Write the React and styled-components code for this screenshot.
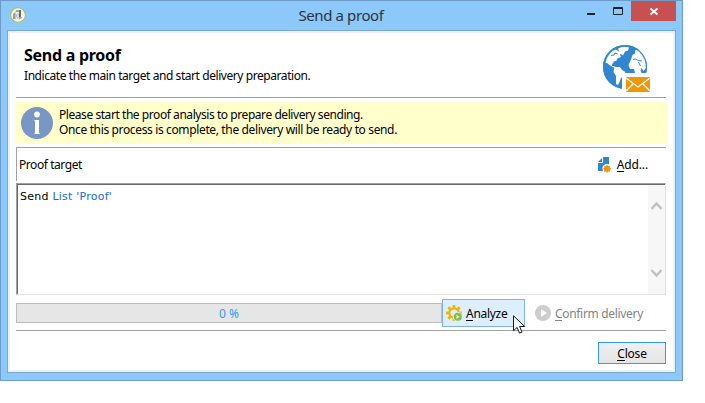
import React from "react";
import styled, { createGlobalStyle } from "styled-components";

const Global = createGlobalStyle`
  * { box-sizing: border-box; }
  body { margin: 0; background: #fff; color: #000; font: 12px/15px "Noto Sans", "Open Sans", sans-serif; overflow: hidden; }
  svg { display: block; flex: none; }
  button { font: inherit; color: inherit; margin: 0; padding: 0; border: 0; background: none; }
`;

const Window = styled.main`
  position: relative;
  width: 683px;
  height: 381px;
  padding: 0 7px 7px 6px;
  border: 1px solid #6c9bc8;
  background: #8dc8fa;
  display: flex;
  flex-direction: column;
`;

const TitleBar = styled.header`
  display: flex;
  height: 29px;
  flex: none;
  padding-left: 2px;
`;

const AppIcon = styled.div`
  width: 18px;
  padding-top: 5px;
`;

const Title = styled.div`
  flex: 1;
  padding-left: 72px;
  text-align: center;
  font-size: 15px;
  line-height: 28px;
  letter-spacing: ${(p) => p.$track}px;
  color: #2b3540;
`;

const Controls = styled.div`
  display: flex;
  margin-right: -1px;
`;

const Control = styled.button`
  width: ${(p) => p.$w}px;
  height: 20px;
  background: ${(p) => p.$bg || "transparent"};
`;

const Client = styled.div`
  width: 669px;
  height: 344px;
  border: 1px solid #78a8d8;
  outline: 2px solid #f0f0f0;
  outline-offset: -3px;
  background: #fff;
  padding: 2px 9px 2px 8px;
  display: flex;
  flex-direction: column;
`;

const Header = styled.section`
  display: flex;
  justify-content: space-between;
  height: 64px;
  flex: none;
  padding: 12px 14px 0 8px;
`;

const Heading = styled.h1`
  margin: 0;
  font-size: 16px;
  line-height: 20px;
  font-weight: 700;
  letter-spacing: ${(p) => p.$track}px;
`;

const Text = styled.div`
  white-space: nowrap;
  letter-spacing: ${(p) => p.$track || 0}px;
  u { text-decoration: none; box-shadow: 0 1px 0 currentColor; display: inline-block; height: 14px; line-height: 15px; }
`;

const Subtitle = styled(Text)`
  margin-top: 3px;
`;

const Rule = styled.div`
  height: 1px;
  flex: none;
  background: #a0a0a0;
`;

const Notice = styled.section`
  display: flex;
  align-items: flex-start;
  gap: 6px;
  height: 42px;
  flex: none;
  margin: 4px -1px 3px 0;
  padding: 5px 5px 0;
  background: #ffffcc;
`;

const TargetBar = styled.section`
  display: flex;
  align-items: center;
  justify-content: space-between;
  height: 34px;
  flex: none;
  padding: 0 18px 0 2px;
  border-top: 1px solid #a0a0a0;
  border-left: 1px solid #a0a0a0;
`;

const AddButton = styled.button`
  display: flex;
  align-items: center;
  gap: 6px;
`;

const TargetList = styled.section`
  display: flex;
  justify-content: space-between;
  height: 112px;
  flex: none;
  margin-top: 2px;
  border: 1px solid #e3e3e3;
  border-top-color: #a0a0a0;
  border-left-color: #a0a0a0;
`;

const ListContent = styled.div`
  flex: 1;
  padding: 4px 0 0 2px;
  border-top: 1px solid #696969;
  border-left: 1px solid #696969;
  font: 11px/15px "DejaVu Sans", sans-serif;
  white-space: nowrap;
  letter-spacing: ${(p) => p.$track}px;
  a { color: #1c68d8; }
`;

const ScrollBar = styled.div`
  width: 17px;
  border-top: 1px solid #696969;
  background: #f7f7f7;
  padding: 16px 0 16px 3px;
  display: flex;
  flex-direction: column;
  justify-content: space-between;
`;

const Actions = styled.section`
  display: flex;
  height: 28px;
  flex: none;
  margin: 4px 0 3px;
`;

const Progress = styled.div`
  width: 426px;
  height: 20px;
  margin-top: 4px;
  border: 1px solid #bcbcbc;
  background: #e6e6e6;
  color: #3399ff;
  text-align: center;
  line-height: 19px;
`;

const AnalyzeButton = styled.button`
  display: flex;
  align-items: center;
  gap: 4px;
  width: 83px;
  height: 28px;
  padding: 0 0 0 3px;
  border: 1px solid #7eb4ea;
  background: #ddeeff;
`;

const ConfirmButton = styled.button`
  display: flex;
  align-items: center;
  gap: 4px;
  margin-left: 10px;
  color: #838383;
`;

const Footer = styled.footer`
  display: flex;
  justify-content: flex-end;
  padding-top: 11px;
`;

const CloseButton = styled.button`
  width: 68px;
  height: 22px;
  border: 1px solid #3399ff;
  background: linear-gradient(#f0f0f0, #e5e5e5);
  display: flex;
  justify-content: center;
  align-items: center;
`;

const Pointer = styled.svg`
  position: absolute;
  left: 512px;
  top: 314px;
`;

const gearTeeth = [0, 45, 90, 135, 180, 225, 270, 315];

const LogoIcon = () => (
  <svg width="18" height="18" viewBox="0 0 18 18">
    <circle cx="9" cy="9" r="7.4" fill="#f3f3f3" stroke="#a3c653" strokeWidth="1.1" />
    <path d="M4 8l2.500-2v7H4z" fill="#9a9a9a" />
    <path d="M6.500 5.500C7 4 9 3.500 10 4.500v1.500H7z" fill="#9a9a9a" />
    <path d="M7.500 8.500c2-1.500 3.500 0 3 2s-3 2-3 0z" fill="#dedede" stroke="#999" strokeWidth=".6" />
    <path d="M11 4v7.500" stroke="#333" strokeWidth="1.400" />
    <path d="M10 13l3-1.500" stroke="#999" />
  </svg>
);

const GlobeIcon = () => (
  <svg width="50" height="49" viewBox="0 0 50 49">
    <circle cx="23" cy="22" r="22" fill="#3186d1" />
    <g fill="#fff">
      <path d="M3.500 18C4.500 12 8 7 13.500 4.500l3 1.500 2.500 2-1 2 1 2-3.500 1.500-1 2-2.500 1-2 3 0 1.500 2.500 0 1 2-3-1-3-2-2.500-2z" />
      <path d="M16 3.500c4-2 8-2 11-1l-1 3-3 1-2 4-3-2z" />
      <path d="M12.500 22l5.500 0 2 3 3.500 2-2 4-2.500 2-1.500 4-1.500 3-2-1 0-8-2.500-4z" />
      <path d="M29 14.500l1.500-4.500 2.500-1.500 0-3 3-1.500c4 3 7 7 8 12v7l-2.500 3-2-3-1 2 1 3-6.500 0-1-4-4 0-1.500-4z" />
    </g>
    <path d="M31 14.500l3-.5 2 1.500 4 .5M36.500 17l2 4" fill="none" stroke="#3186d1" />
    <path d="M9 10.500l3-.5 1-2 2.500 1" fill="none" stroke="#3186d1" />
    <circle cx="23" cy="22" r="21.400" fill="none" stroke="#3186d1" strokeWidth="1.200" />
    <path d="M20 28h30v21H20z" fill="#fff" />
    <path d="M24 32h24v15H24z" fill="#f09609" />
    <path d="M24 33l12 9 12-9M24 46l7-7M48 46l-7-7" fill="none" stroke="#fff" strokeWidth="1.300" />
  </svg>
);

const InfoIcon = () => (
  <svg width="32" height="32" viewBox="0 0 32 32">
    <circle cx="16" cy="16" r="16" fill="#7897c4" />
    <circle cx="16" cy="7.500" r="2.900" fill="#fff" />
    <path d="M13.500 13h4.500v13h.7v1h-5.200v-1h.5V14h-.5z" fill="#fff" />
  </svg>
);

const AddIcon = () => (
  <svg width="13" height="16" viewBox="0 0 13 16">
    <path d="M5 0h6v14H0V6h5z" fill="#3186d1" />
    <path d="M4 1v4H0z" fill="#3186d1" />
    <circle cx="9" cy="11.500" r="4.600" fill="#fff" />
    <g fill="#f09609">
      <circle cx="9" cy="11.800" r="3" />
      {gearTeeth.map((a) => (
        <path key={a} d="M8.300 8h1.400v2H8.300z" transform={`rotate(${a} 9 11.800)`} />
      ))}
    </g>
  </svg>
);

const AnalyzeIcon = () => (
  <svg width="16" height="16" viewBox="0 0 16 16">
    <circle cx="8" cy="8" r="4.700" fill="none" stroke="#f4b400" strokeWidth="2.200" />
    {gearTeeth.map((a) => (
      <path key={a} d="M6.600 0h2.800v3H6.600z" fill="#f4b400" transform={`rotate(${a} 8 8)`} />
    ))}
    <circle cx="11.800" cy="11.800" r="4.900" fill="#ddeeff" />
    <circle cx="11.800" cy="11.800" r="4" fill="#7dc142" />
    <path d="M10.500 9.700v4.200l3.200-2.100z" fill="#fff" />
  </svg>
);

export default function App() {
  return (
    <>
      <Global />
      <Window>
        <TitleBar>
          <AppIcon><LogoIcon /></AppIcon>
          <Title $track={-0.4}>Send a proof</Title>
          <Controls>
            <Control $w={27} aria-label="Minimize">
              <svg width="27" height="20"><path d="M4 12h8v2H4z" fill="#1e2328" /></svg>
            </Control>
            <Control $w={21} aria-label="Maximize">
              <svg width="21" height="20"><path d="M3.500 6.500h9v7h-9zM3 7.500h10" fill="none" stroke="#1e2328" /></svg>
            </Control>
            <Control $w={45} $bg="#c75050" aria-label="Close window">
              <svg width="45" height="20"><path d="M19.500 7.500l7 6M26.500 7.500l-7 6" stroke="#fff" strokeWidth="1.900" /></svg>
            </Control>
          </Controls>
        </TitleBar>
        <Client>
          <Header>
            <div>
              <Heading $track={-0.27}>Send a proof</Heading>
              <Subtitle $track={-0.43}>Indicate the main target and start delivery preparation.</Subtitle>
            </div>
            <GlobeIcon />
          </Header>
          <Rule />
          <Notice>
            <InfoIcon />
            <div>
              <Text $track={-0.44}>Please start the proof analysis to prepare delivery sending.</Text>
              <Text $track={-0.36}>Once this process is complete, the delivery will be ready to send.</Text>
            </div>
          </Notice>
          <TargetBar>
            <Text $track={-0.43}>Proof target</Text>
            <AddButton><AddIcon /><Text $track={-0.15}><u>A</u>dd...</Text></AddButton>
          </TargetBar>
          <TargetList>
            <ListContent $track={0.24}>Send <a>List 'Proof'</a></ListContent>
            <ScrollBar>
              <svg width="11" height="9"><path d="M.5 8l5-5.500 5 5.500" fill="none" stroke="#c0c0c0" strokeWidth="2.500" /></svg>
              <svg width="11" height="9"><path d="M.5 1l5 5.500 5-5.500" fill="none" stroke="#c0c0c0" strokeWidth="2.500" /></svg>
            </ScrollBar>
          </TargetList>
          <Actions>
            <Progress>0 %</Progress>
            <AnalyzeButton><AnalyzeIcon /><Text $track={-0.3}><u>A</u>nalyze</Text></AnalyzeButton>
            <ConfirmButton>
              <svg width="16" height="16"><circle cx="8" cy="8" r="8" fill="#cdcdcd" /><path d="M6 4v8l6-4z" fill="#fff" /></svg>
              <Text $track={-0.32}><u>C</u>onfirm delivery</Text>
            </ConfirmButton>
          </Actions>
          <Rule />
          <Footer>
            <CloseButton><Text $track={-0.2}><u>C</u>lose</Text></CloseButton>
          </Footer>
        </Client>
        <Pointer width="13" height="20" viewBox="0 0 13 20">
          <path d="M.5.800v15l3.600-3.400 2.400 5.700 2.500-1-2.400-5.600h5z" fill="#fff" stroke="#101820" />
        </Pointer>
      </Window>
    </>
  );
}
